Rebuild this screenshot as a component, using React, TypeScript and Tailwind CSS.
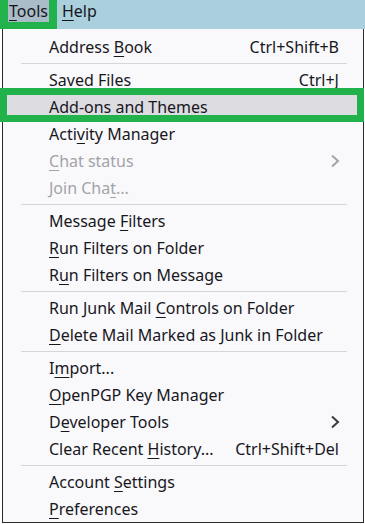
type Item = {
  label: React.ReactNode;
  shortcut?: string;
  disabled?: boolean;
  submenu?: boolean;
  active?: boolean;
};

const K = ({ c }: { c: string }) => <u className="underline-offset-[3px] decoration-1">{c}</u>;

const groups: Item[][] = [
  [{ label: <>Address <K c="B" />ook</>, shortcut: "Ctrl+Shift+B" }],
  [
    { label: "Saved Files", shortcut: "Ctrl+J" },
    { label: "Add-ons and Themes", active: true },
    { label: <>Acti<K c="v" />ity Manager</> },
    { label: <><K c="C" />hat status</>, disabled: true, submenu: true },
    { label: <>Join Cha<K c="t" />...</>, disabled: true },
  ],
  [
    { label: <>Message <K c="F" />ilters</> },
    { label: <><K c="R" />un Filters on Folder</> },
    { label: <>R<K c="u" />n Filters on Message</> },
  ],
  [
    { label: <>Run Junk Mail <K c="C" />ontrols on Folder</> },
    { label: <><K c="D" />elete Mail Marked as Junk in Folder</> },
  ],
  [
    { label: <>I<K c="m" />port...</> },
    { label: <><K c="O" />penPGP Key Manager</> },
    { label: <>D<K c="e" />veloper Tools</>, submenu: true },
    { label: <>Clear Recent <K c="H" />istory...</>, shortcut: "Ctrl+Shift+Del" },
  ],
  [
    { label: <>Account <K c="S" />ettings</> },
    { label: <><K c="P" />references</> },
  ],
];

// submenu arrow, drawn like the platform's ">" glyph
const Arrow = ({ muted }: { muted?: boolean }) => (
  <svg width="10" height="14" viewBox="0 0 10 14" className={`-mr-[1px] ${muted ? "text-[#a3a3aa]" : "text-[#3b3a40]"}`}>
    <polyline points="2,1.5 8,7 2,12.5" fill="none" stroke="currentColor" strokeWidth="2" />
  </svg>
);

function Row({ item }: { item: Item }) {
  return (
    <div
      className={`relative flex h-[27px] items-center pl-[46px] pr-[24px] ${
        item.disabled ? "text-[#a3a3aa]" : "text-[#18171d]"
      } ${item.active ? "bg-[#dcdce1]" : ""}`}
    >
      {item.active && (
        <div className="absolute -left-[3px] -right-[1px] -top-[5px] -bottom-[2px] border-[7px] border-[#21b24b]" />
      )}
      <span className="relative flex-1 whitespace-nowrap">{item.label}</span>
      {item.shortcut && <span className="relative whitespace-nowrap">{item.shortcut}</span>}
      {item.submenu && <Arrow muted={item.disabled} />}
    </div>
  );
}

export default function App() {
  return (
    <div
      className="h-[524px] w-[365px] overflow-hidden bg-white text-[16px]"
      style={{ fontFamily: '"Noto Sans", "Open Sans", sans-serif' }}
    >
      <div className="flex h-[29px] items-start bg-[#aad0de] text-[#16151b]">
        <div className="h-[29px] bg-[#21b24b] px-[8px] pb-[7px]">
          <div className="flex h-[22px] items-center bg-[#a9bcc8] px-[1px]">
            <span><K c="T" />ools</span>
          </div>
        </div>
        <div className="flex h-[22px] items-center pl-[5px]">
          <span><K c="H" />elp</span>
        </div>
      </div>
      <div className="ml-[2px] w-[362px] border-x border-b border-[#2a2a2e] bg-[#f9f9fb] pt-[4px]">
        {groups.map((g, i) => (
          <div key={i}>
            {i > 0 && (
              <div className="flex h-[6px] items-center pl-[18px] pr-[16px]">
                <div className="h-px w-full bg-[#d4d4da]" />
              </div>
            )}
            {g.map((item, j) => (
              <Row key={j} item={item} />
            ))}
          </div>
        ))}
      </div>
    </div>
  );
}
